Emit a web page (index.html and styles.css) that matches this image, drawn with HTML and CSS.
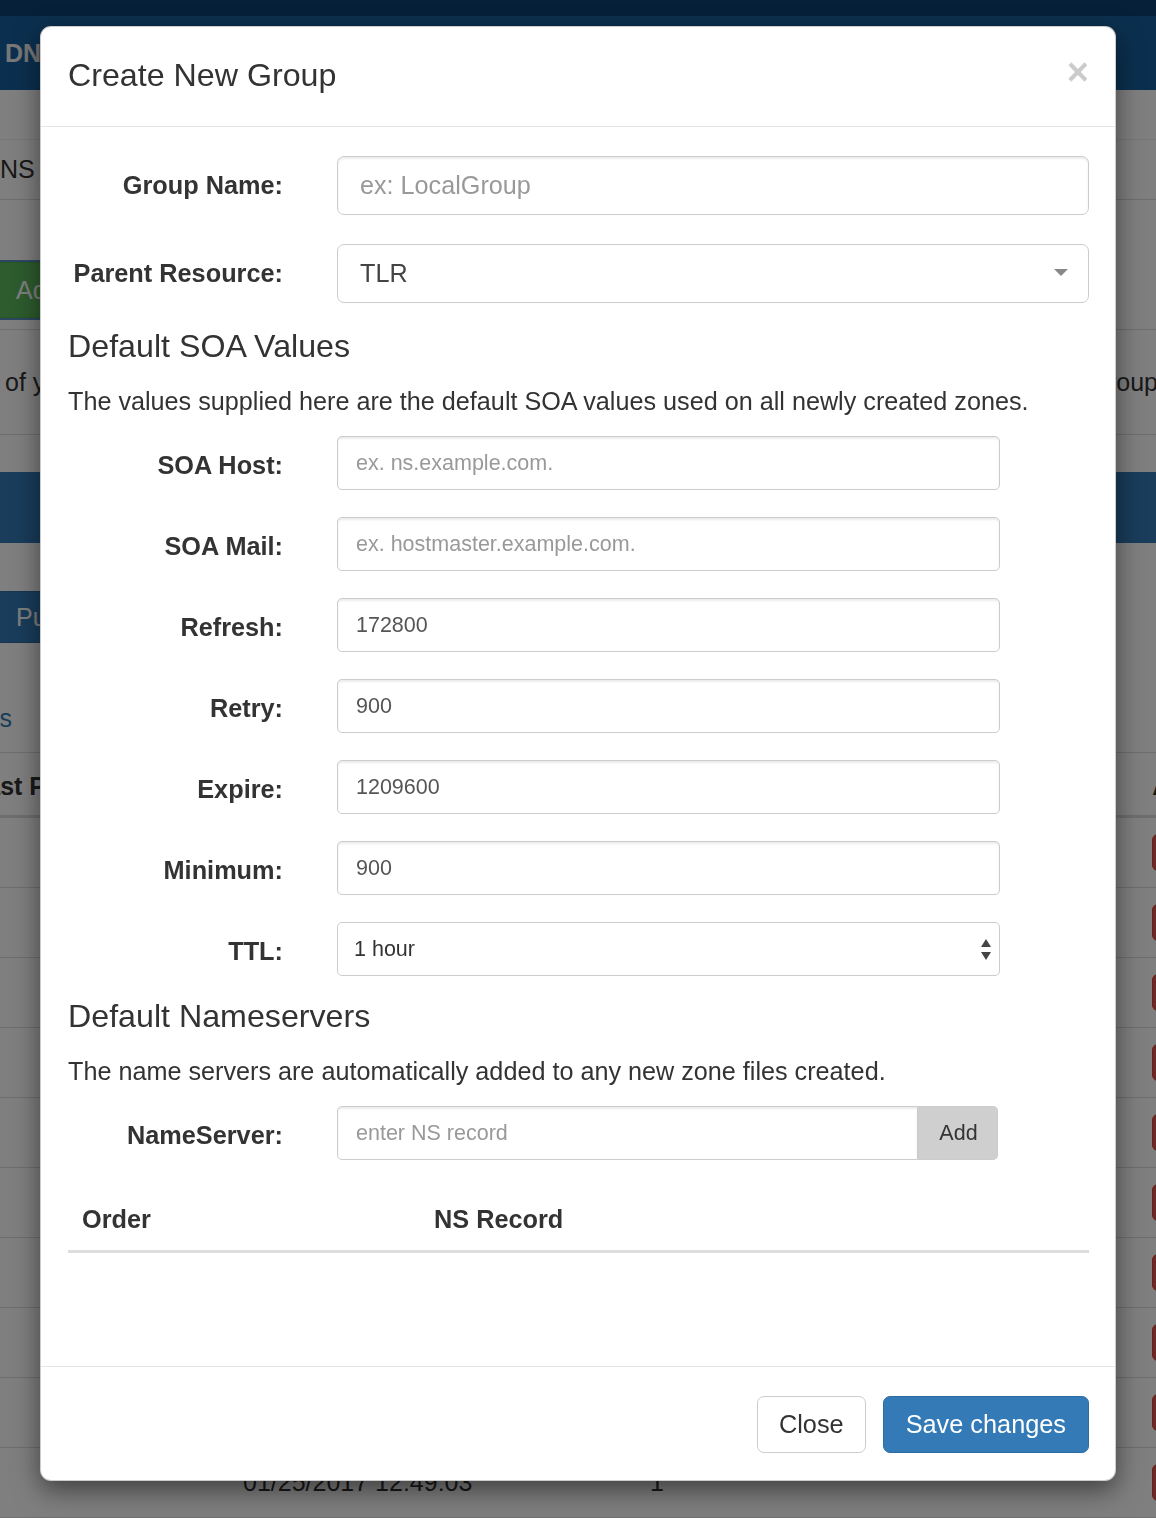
FILE: index.html
```html
<!DOCTYPE html>
<html lang="en">
<head>
<meta charset="utf-8">
<title>Create New Group</title>
<link rel="stylesheet" href="styles.css">
</head>
<body>
<div class="page">
  <div class="bg-top"></div>
  <div class="bg-nav"><span class="brand">DNS</span></div>
  <div class="bg-sub"></div>
  <div class="bg-tabs"><span class="tab">DNS</span></div>
  <div class="bg-toolbar"><span class="bg-btn green">Add</span></div>
  <div class="bg-desc"><span class="desc-left">of your</span><span class="desc-right">group</span></div>
  <div class="bg-space1"></div>
  <div class="bg-panelhead"></div>
  <div class="bg-space2"></div>
  <div class="bg-pushrow"><span class="bg-btn blue">Push</span></div>
  <div class="bg-linkrow"><span class="bg-link">Groups</span></div>
  <div class="bg-thead"><span class="th-left">Last P</span><span class="th-right">Actions</span></div>
  <div class="bg-row"><span class="del"></span></div>
  <div class="bg-row"><span class="del"></span></div>
  <div class="bg-row"><span class="del"></span></div>
  <div class="bg-row"><span class="del"></span></div>
  <div class="bg-row"><span class="del"></span></div>
  <div class="bg-row"><span class="del"></span></div>
  <div class="bg-row"><span class="del"></span></div>
  <div class="bg-row"><span class="del"></span></div>
  <div class="bg-row"><span class="del"></span></div>
  <div class="bg-row"><span class="ts">01/25/2017 12:49:03</span><span class="cnt">1</span><span class="del"></span></div>
</div>

<div class="backdrop"></div>

<div class="modal">
  <div class="modal-header">
    <h4 class="modal-title">Create New Group</h4>
    <button class="close" type="button">&times;</button>
  </div>
  <div class="modal-body">
    <div class="form-group lg first">
      <label class="control-label">Group Name:</label>
      <input class="form-control" type="text" placeholder="ex: LocalGroup">
    </div>
    <div class="form-group lg gap-lg">
      <label class="control-label">Parent Resource:</label>
      <div class="form-control fake-select">
        <span class="sel-text">TLR</span>
        <svg class="caret" width="14" height="7" viewBox="0 0 14 7"><path d="M0 0 L14 0 L7 7 Z" fill="#888"/></svg>
      </div>
    </div>

    <h4 class="section-title first-section">Default SOA Values</h4>
    <p class="section-help">The values supplied here are the default SOA values used on all newly created zones.</p>

    <div class="form-group sm first-sm">
      <label class="control-label">SOA Host:</label>
      <input class="form-control input-sm" type="text" placeholder="ex. ns.example.com.">
    </div>
    <div class="form-group sm">
      <label class="control-label">SOA Mail:</label>
      <input class="form-control input-sm" type="text" placeholder="ex. hostmaster.example.com.">
    </div>
    <div class="form-group sm">
      <label class="control-label">Refresh:</label>
      <input class="form-control input-sm" type="text" value="172800">
    </div>
    <div class="form-group sm">
      <label class="control-label">Retry:</label>
      <input class="form-control input-sm" type="text" value="900">
    </div>
    <div class="form-group sm">
      <label class="control-label">Expire:</label>
      <input class="form-control input-sm" type="text" value="1209600">
    </div>
    <div class="form-group sm">
      <label class="control-label">Minimum:</label>
      <input class="form-control input-sm" type="text" value="900">
    </div>
    <div class="form-group sm">
      <label class="control-label">TTL:</label>
      <div class="form-control input-sm native-select">
        <span class="sel-text dark">1 hour</span>
        <svg class="updown" width="10" height="21" viewBox="0 0 10 21"><path d="M0 8 L5 0 L10 8 Z M0 13 L10 13 L5 21 Z" fill="#444"/></svg>
      </div>
    </div>

    <h4 class="section-title second-section">Default Nameservers</h4>
    <p class="section-help">The name servers are automatically added to any new zone files created.</p>

    <div class="form-group sm first-sm">
      <label class="control-label">NameServer:</label>
      <div class="input-group">
        <input class="form-control input-sm grouped" type="text" placeholder="enter NS record">
        <button class="addon" type="button">Add</button>
      </div>
    </div>

    <table class="ns-table">
      <thead>
        <tr><th class="col-order">Order</th><th>NS Record</th></tr>
      </thead>
      <tbody></tbody>
    </table>
  </div>
  <div class="modal-footer">
    <button class="btn btn-default" type="button">Close</button>
    <button class="btn btn-primary" type="button">Save changes</button>
  </div>
</div>
</body>
</html>
```

FILE: styles.css
```css
* { box-sizing: border-box; }

html, body {
  margin: 0;
  padding: 0;
  height: 1518px;
  overflow: hidden;
}

body {
  font-family: "Liberation Sans", Arial, Helvetica, sans-serif;
  color: #333;
  background: #fff;
}

/* ---------- background page (under the backdrop) ---------- */
.page {
  width: 1156px;
  height: 1518px;
  overflow: hidden;
  background: #fff;
  font-size: 25px;
}

.bg-top { height: 16px; background: #0c4072; }

.bg-nav {
  height: 74px;
  background: #16619f;
  display: flex;
  align-items: center;
  padding-left: 5px;
}
.brand {
  color: #f0f0f0;
  font-size: 25px;
  font-weight: bold;
  white-space: nowrap;
}

.bg-sub { height: 50px; background: #fff; border-bottom: 1px solid #eee; }

.bg-tabs {
  height: 60px;
  display: flex;
  align-items: center;
  border-bottom: 1px solid #ddd;
}
.tab { margin-left: -18px; color: #333; white-space: nowrap; }

.bg-toolbar {
  height: 130px;
  padding-top: 62px;
  border-bottom: 1px solid #ddd;
}
.bg-btn {
  display: flex;
  align-items: center;
  height: 56px;
  width: 200px;
  margin-left: -8px;
  padding-left: 23px;
  color: #fff;
  border-radius: 7px;
  white-space: nowrap;
}
.bg-btn.green {
  background: #5cb85c;
  border: 1px solid #4cae4c;
  box-shadow: 0 0 0 2px #5b8fc7;
}
.bg-btn.blue {
  background: #337ab7;
  border: 1px solid #2e6da4;
  height: 52px;
}

.bg-desc {
  height: 105px;
  display: flex;
  align-items: center;
  justify-content: space-between;
  border-bottom: 1px solid #ddd;
  white-space: nowrap;
}
.desc-left { margin-left: 5px; }
.desc-right { margin-right: -2px; }

.bg-space1 { height: 37px; }
.bg-panelhead { height: 71px; background: #337ab7; }
.bg-space2 { height: 48px; }
.bg-pushrow { height: 52px; }

.bg-linkrow {
  height: 109px;
  display: flex;
  align-items: center;
  padding-top: 42px;
}
.bg-link { color: #337ab7; margin-left: -70px; white-space: nowrap; }

.bg-thead {
  height: 66px;
  display: flex;
  align-items: center;
  justify-content: space-between;
  padding-top: 4px;
  border-top: 1px solid #ddd;
  border-bottom: 3px solid #ddd;
  font-weight: bold;
  white-space: nowrap;
}
.th-left { margin-left: -29px; }
.th-right { margin-right: -88px; }

.bg-row {
  height: 70px;
  display: flex;
  align-items: center;
  border-bottom: 1px solid #ddd;
  white-space: nowrap;
}
.ts { margin-left: 243px; width: 407px; color: #333; }
.cnt { color: #333; }
.del {
  margin-left: auto;
  margin-right: -56px;
  width: 60px;
  height: 37px;
  background: #d9534f;
  border: 1px solid #d43f3a;
  border-radius: 6px;
}

/* ---------- backdrop ---------- */
.backdrop {
  position: fixed;
  inset: 0;
  background: rgba(0, 0, 0, 0.5);
}

/* ---------- modal ---------- */
.modal {
  position: absolute;
  top: 26px;
  left: 40px;
  width: 1076px;
  background: #fff;
  border: 1px solid rgba(0, 0, 0, 0.2);
  border-radius: 11px;
  box-shadow: 0 9px 27px rgba(0, 0, 0, 0.5);
}

.modal-header {
  display: flex;
  justify-content: space-between;
  align-items: flex-start;
  padding: 25px 26px 28px 27px;
  border-bottom: 1px solid #e5e5e5;
}
.modal-title {
  margin: 0;
  font-size: 32.2px;
  line-height: 46px;
  font-weight: normal;
  color: #333;
}
.close {
  margin: 1px 0 0;
  padding: 0;
  border: 0;
  background: transparent;
  font-family: "Liberation Sans", Arial, sans-serif;
  font-size: 38px;
  line-height: 38px;
  font-weight: bold;
  color: #000;
  opacity: 0.2;
  cursor: pointer;
}

.modal-body {
  padding: 29px 26px 113px 27px;
}

.form-group {
  display: grid;
  column-gap: 54px;
  align-items: center;
}
.form-group.lg { grid-template-columns: 215px 752px; }
.form-group.sm { grid-template-columns: 215px 663px; margin-top: 27px; }
.form-group.gap-lg { margin-top: 29px; }
.form-group.first-sm { margin-top: 17px; }

.control-label {
  font-size: 25.3px;
  font-weight: bold;
  color: #333;
  text-align: right;
  white-space: nowrap;
  line-height: 30px;
}
.form-group.lg .control-label { margin-top: -1px; }
.form-group.sm .control-label { padding-top: 4px; }

.form-control {
  display: block;
  width: 100%;
  height: 59px;
  padding: 0 22px;
  font-family: "Liberation Sans", Arial, sans-serif;
  font-size: 25.2px;
  color: #555;
  background: #fff;
  border: 1px solid #ccc;
  border-radius: 7px;
  box-shadow: inset 0 2px 2px rgba(0, 0, 0, 0.075);
  outline: none;
}
.form-control::placeholder { color: #999; opacity: 1; }

.form-control.input-sm {
  height: 54px;
  padding: 0 18px;
  font-size: 21.5px;
  border-radius: 5px;
}

.form-control.fake-select {
  display: flex;
  align-items: center;
  justify-content: space-between;
  padding: 0 20px 0 22px;
  box-shadow: none;
}
.sel-text { color: #444; }
.sel-text.dark { color: #333; }
.caret { display: block; margin-top: -3px; }

.form-control.native-select {
  display: flex;
  align-items: center;
  justify-content: space-between;
  padding: 0 8px 0 16px;
  background: #fff;
  box-shadow: none;
}
.updown { display: block; }

.section-title {
  margin: 0;
  font-size: 32.2px;
  line-height: 36px;
  font-weight: normal;
  color: #333;
}
.first-section { margin-top: 25px; }
.second-section { margin-top: 22px; }

.section-help {
  margin: 19px 0 0;
  font-size: 25.2px;
  line-height: 36px;
  color: #333;
  white-space: nowrap;
}

.input-group {
  display: flex;
  width: 661px;
}
.form-control.grouped {
  width: 581px;
  border-radius: 5px 0 0 5px;
}
.addon {
  width: 80px;
  height: 54px;
  margin: 0;
  padding: 0 0 0 2px;
  border: 1px solid #ccc;
  border-left: 0;
  border-radius: 0 5px 5px 0;
  background: #cfcfcf;
  color: #333;
  font-family: "Liberation Sans", Arial, sans-serif;
  font-size: 21.5px;
}

.ns-table {
  width: 100%;
  margin-top: 26px;
  border-collapse: collapse;
  border-spacing: 0;
}
.ns-table th {
  padding: 15px 14px 13px;
  font-size: 25.3px;
  line-height: 36px;
  font-weight: bold;
  text-align: left;
  color: #333;
  border-bottom: 3px solid #ddd;
}
.ns-table .col-order { width: 352px; }

.modal-footer {
  display: flex;
  justify-content: flex-end;
  gap: 17px;
  padding: 29px 26px 27px 27px;
  border-top: 1px solid #e5e5e5;
}
.btn {
  height: 57px;
  margin: 0;
  padding: 0 21px;
  font-family: "Liberation Sans", Arial, sans-serif;
  font-size: 25.3px;
  border-radius: 7px;
  cursor: pointer;
}
.btn-default {
  background: #fff;
  color: #333;
  border: 1px solid #ccc;
}
.btn-primary {
  background: #337ab7;
  color: #fff;
  border: 1px solid #2e6da4;
  padding: 0 22px;
}
```
